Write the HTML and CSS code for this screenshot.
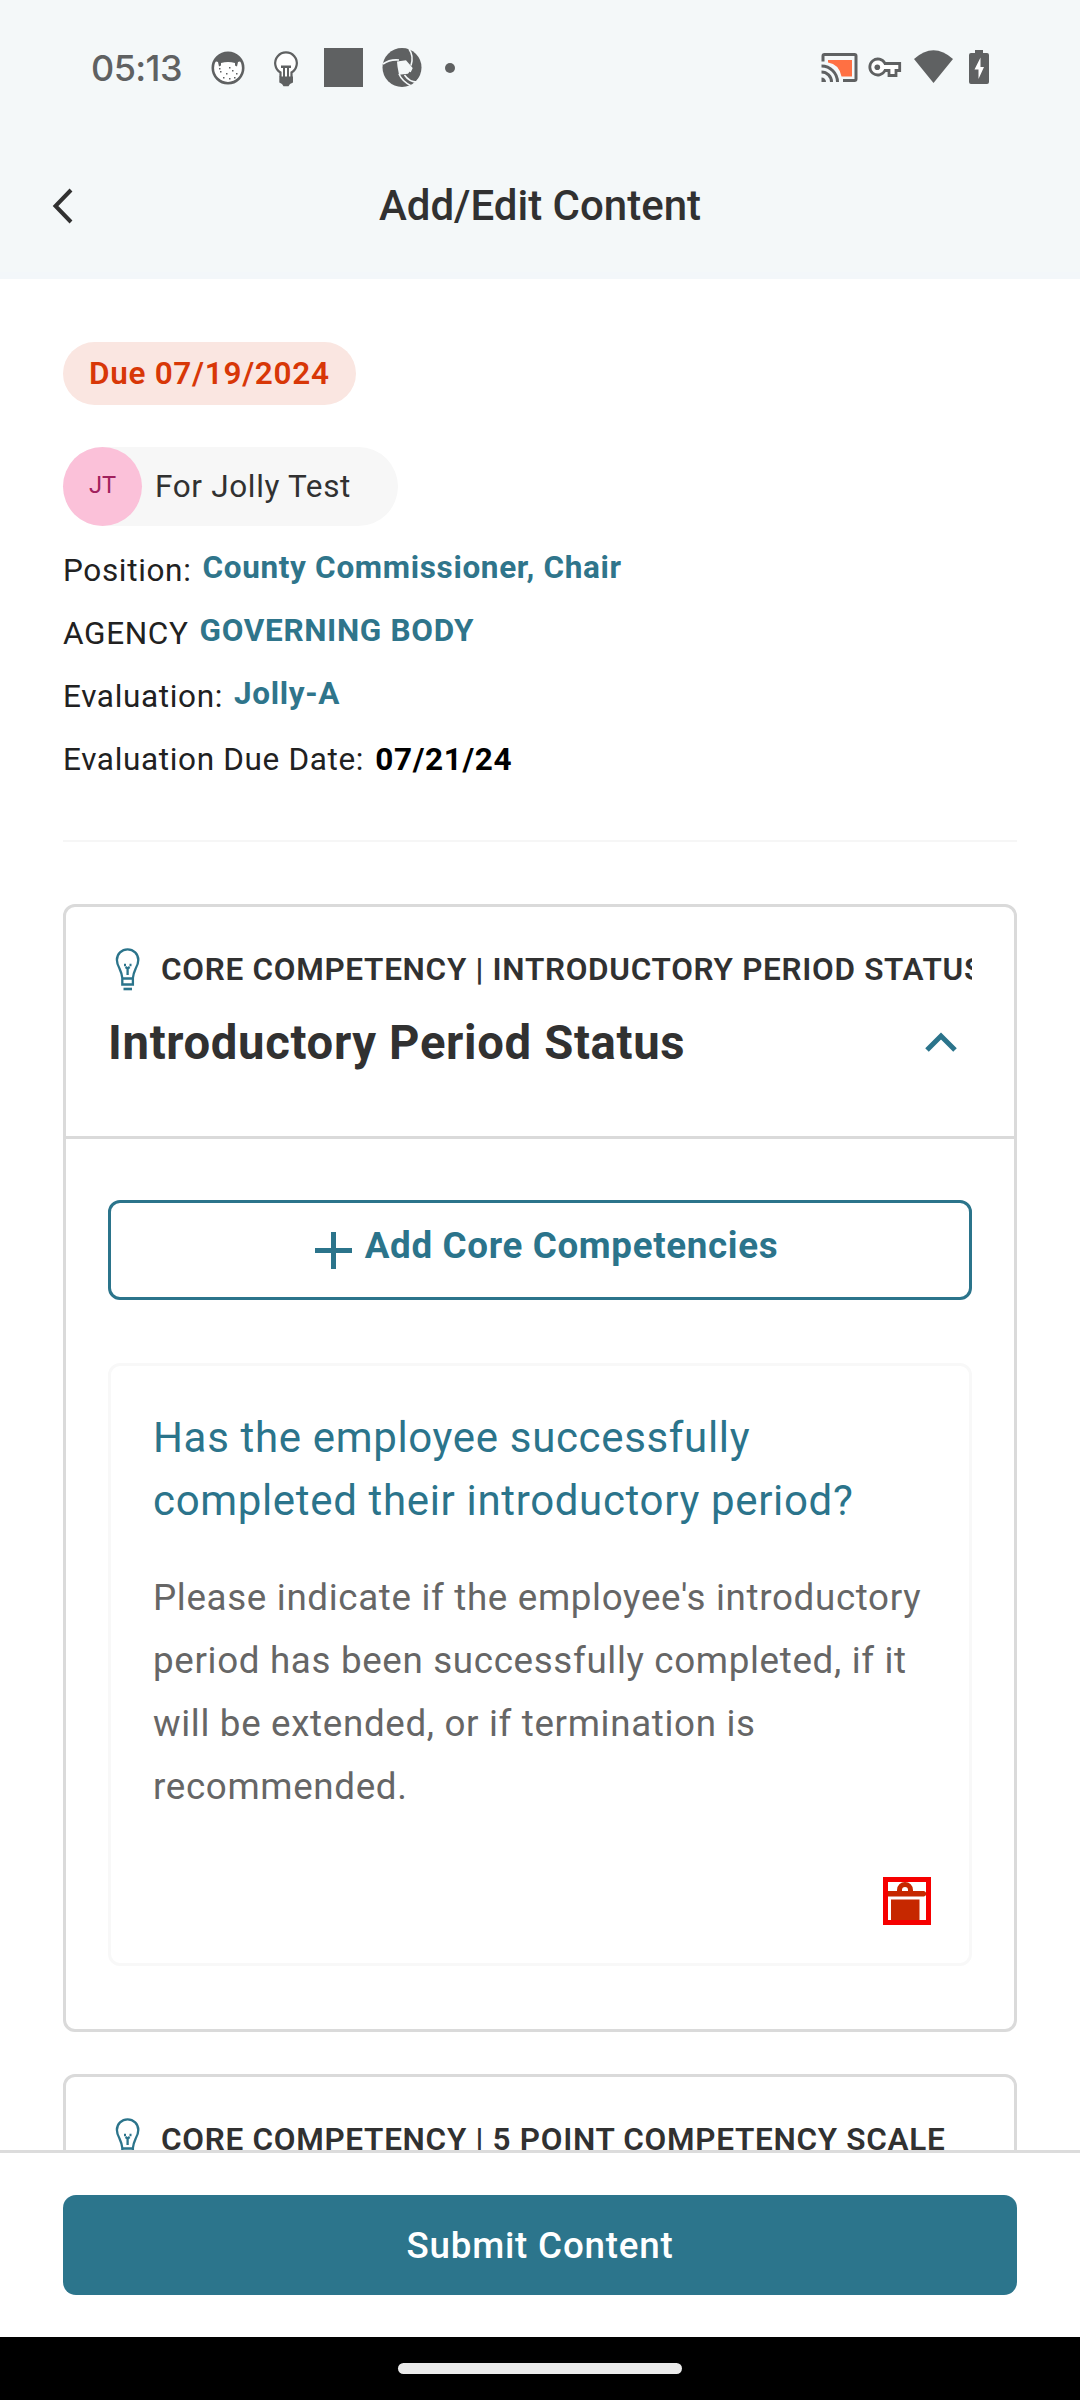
FILE: index.html
```html
<!DOCTYPE html>
<html lang="en">
<head>
<meta charset="utf-8">
<title>Add/Edit Content</title>
<link rel="stylesheet" href="styles.css">
</head>
<body>
<div class="screen">
  <header class="top">
    <div class="status">
      <span class="clock">05:13</span>
      <svg class="status-left" width="250" height="48" viewBox="206 44 250 48" fill="#5f6162">
        <circle cx="228" cy="68" r="15.2" fill="#fff" stroke="#5f6162" stroke-width="2.6"/>
        <path d="M214.500 61a15 15 0 0 1 27 0l-3.500 1-1 4.500-2-1v-2.500q-7-2-14 0v2.500l-2 1-1-4.500z"/>
        <path d="M220 71h1.500v1.500h-1.500zM226 73h1.500v1.500h-1.500zM232 70h1.500v1.500h-1.500zM236 73h1.500v1.500h-1.500zM223 77h1.500v1.500h-1.500zM229 78h1.500v1.500h-1.500zM234 77h1.500v1.500h-1.500zM219 68h1.500v1.500h-1.500zM229 67h1.500v1.500h-1.500z"/>
        <path d="M280.500 77v-4.500a10.800 10.800 0 1 1 11 0V77" fill="#fff" stroke="#5f6162" stroke-width="2.200"/>
        <path d="M279.300 76.500h13.700v6l-3 1.500-1.500 2.200h-5l-1.500-2.200-2.700-1.500z"/>
        <path d="M281 65.500h10v2.500h-2v10h-2v-10h-2v10h-2v-10h-2z"/>
        <path d="M324 48h39v39h-39z"/>
        <circle cx="402" cy="67.500" r="19.500"/>
        <path d="M397 61.500l9-1.200 6.500 7.500-4.500 6-9 1-1.500-8z" fill="#f4f8f9"/>
        <path d="M383 64q7-5 16-4M409 49q5 7 2 16.500M419 82q-9 1-14.500-7M412 68l-2 4M399 74q3 7 11.500 11.500" fill="none" stroke="#f4f8f9" stroke-width="1.600"/>
        <path d="M419 78l3-2v8h-8z" fill="#f4f8f9"/>
        <circle cx="450" cy="68" r="5"/>
      </svg>
      <svg class="status-right" width="180" height="48" viewBox="816 44 180 48" fill="#5f6162">
        <path d="M828 60h24v16.500h-10.500Q839 64 828 62.500z" fill="#ff7043"/>
        <path d="M823 61.500v-5.500a1.500 1.500 0 0 1 1.500-1.500h30a1.500 1.500 0 0 1 1.500 1.500v23a1.500 1.500 0 0 1-1.500 1.500H843" fill="none" stroke="#5f6162" stroke-width="3"/>
        <path d="M821.500 66a16 16 0 0 1 16 16M821.500 72a10 10 0 0 1 10 10" fill="none" stroke="#5f6162" stroke-width="3"/>
        <path d="M821.500 77.500a4.500 4.500 0 0 1 4.500 4.500h-4.500z"/>
        <path d="M885 63.500h14.700v7h-3.700v5h-7v-5h-4a8 8 0 1 1 0-7z" fill="#fff" stroke="#5f6162" stroke-width="2.800"/>
        <circle cx="877.300" cy="67.300" r="2.800"/>
        <path d="M914 59Q933.500 41.500 953 59L933.500 83z"/>
        <path d="M975 50h8v3h4a2 2 0 0 1 2 2v27a2 2 0 0 1-2 2h-16a2 2 0 0 1-2-2V55a2 2 0 0 1 2-2h4z"/>
        <path d="M980.500 57.500v9.500h3.500l-5.500 12v-9.500H974.500z" fill="#fff"/>
      </svg>
    </div>
    <div class="appbar">
      <svg class="back" width="22" height="36" viewBox="0 0 22 36"><path d="M19 2L3.500 18 19 34" fill="none" stroke="#313131" stroke-width="4"/></svg>
      <h1 class="title">Add/Edit Content</h1>
    </div>
  </header>

  <main class="content">
    <div class="due">Due 07/19/2024</div>
    <div class="person"><span class="avatar">JT</span><span class="person-name">For Jolly Test</span></div>
    <dl class="facts">
      <div class="fact"><dt>Position:</dt><dd>County Commissioner, Chair</dd></div>
      <div class="fact"><dt>AGENCY</dt><dd>GOVERNING BODY</dd></div>
      <div class="fact"><dt>Evaluation:</dt><dd>Jolly-A</dd></div>
      <div class="fact"><dt>Evaluation Due Date:</dt><dd class="date">07/21/24</dd></div>
    </dl>
    <hr class="rule">

    <section class="card">
      <div class="card-head">
        <div class="kicker">
          <svg class="bulb" width="40" height="44" viewBox="0 0 40 44"><use href="#bulb-shape"/></svg>
          <span class="kicker-text">CORE COMPETENCY | INTRODUCTORY PERIOD STATUS</span>
        </div>
        <div class="card-title-row">
          <h2 class="card-title">Introductory Period Status</h2>
          <svg class="chevron" width="32" height="20" viewBox="0 0 32 20"><path d="M2 18L16 4 30 18" fill="none" stroke="#2b748b" stroke-width="5"/></svg>
        </div>
      </div>
      <div class="card-body">
        <button class="add">
          <svg width="37" height="37" viewBox="0 0 37 37"><path d="M18.500 0v37M0 18.500h37" stroke="#2b748b" stroke-width="5"/></svg>
          <span class="add-text">Add Core Competencies</span>
        </button>
        <article class="item">
          <h3 class="question">Has the employee successfully<br>completed their introductory period?</h3>
          <p class="help">Please indicate if the employee's introductory<br>period has been successfully completed, if it<br>will be extended, or if termination is<br>recommended.</p>
          <svg class="trash" width="48" height="48" viewBox="0 0 48 48">
            <path d="M5 14h36a2.800 2.800 0 0 1 0 5.500H5z" fill="#c62800"/>
            <path d="M16.500 16v-3a5.500 5.500 0 0 1 11 0v3" fill="none" stroke="#c62800" stroke-width="5"/>
            <path d="M8 22.500h28.500V44H8z" fill="#c62800"/>
            <path d="M2.500 2.500h43v43h-43z" fill="none" stroke="#f60000" stroke-width="5"/>
          </svg>
        </article>
      </div>
    </section>

    <section class="card next-card">
      <div class="card-head">
        <div class="kicker">
          <svg class="bulb" width="40" height="44" viewBox="0 0 40 44"><use href="#bulb-shape"/></svg>
          <span class="kicker-text">CORE COMPETENCY | 5 POINT COMPETENCY SCALE</span>
        </div>
      </div>
    </section>
  </main>

  <footer class="footer"><button class="submit">Submit Content</button></footer>
  <nav class="nav"><span class="handle"></span></nav>
</div>
<svg width="0" height="0" class="defs">
  <defs>
    <g id="bulb-shape" fill="none" stroke="#2b748b" stroke-width="2.300">
      <path d="M14.300 36.500V30Q14 26 11.500 20.500C9.500 17 8.900 14.500 8.900 12A10.700 10.700 0 0 1 30.300 12C30.300 14.500 29.700 17 27.700 20.500Q25.200 26 24.900 30V36.500zM14 30.500h11.200"/>
      <path d="M19.600 27v-7.500M16 17h2M21.500 17h2M17.500 19l2.100 1.500 2.100-1.500"/>
      <path d="M15.500 41h8.500" stroke-width="2.600"/>
    </g>
  </defs>
</svg>
</body>
</html>
```
FILE: styles.css
```css
* { box-sizing: border-box; margin: 0; padding: 0; }
body { font-family: Roboto, "Liberation Sans", sans-serif; background: #fff; color: #313131; }
button { font: inherit; }
.screen { width: 1080px; height: 2400px; display: flex; flex-direction: column; overflow: hidden; background: #fff; }
.defs { display: block; }

.top { height: 279px; flex: none; background: #f4f8f9; border-bottom: 7px solid #f3f7fa; }
.status { height: 136px; display: flex; align-items: center; padding: 0 84px 0 91px; }
.clock { width: 115px; font-family: Inter, sans-serif; font-size: 36px; font-weight: 500; line-height: 48px; color: #5f6162; letter-spacing: -0.6px; }
.status-right { margin-left: auto; }
.appbar { height: 136px; display: grid; grid-template-columns: 63px 1fr 63px; align-items: center; padding: 3px 52px 0; }
.title { grid-column: 2; text-align: center; font-size: 42px; font-weight: 500; line-height: 56px; }

.content { flex: 1; min-height: 0; overflow: hidden; padding: 63px 63px 0; display: flex; flex-direction: column; }
.content > * { flex: none; }
.due { align-self: flex-start; height: 63px; border-radius: 32px; padding: 0 26px; background: #fae6e1; color: #d83707; font-size: 31.5px; font-weight: 600; line-height: 63px; letter-spacing: 0.7px; }
.person { align-self: flex-start; display: flex; align-items: center; width: 335px; height: 79px; margin-top: 42px; border-radius: 40px; background: #f7f7f7; }
.avatar { width: 79px; height: 79px; border-radius: 50%; background: #fbc1d9; color: #a1215d; font-size: 23.6px; line-height: 76px; text-align: center; }
.person-name { margin-left: 13px; font-size: 31.5px; letter-spacing: 0.66px; }
.facts { margin-top: 13px; }
.fact { display: flex; align-items: center; gap: 11px; height: 63px; font-size: 31.5px; line-height: 38px; letter-spacing: 0.66px; color: #212121; }
.fact dd { padding-bottom: 5px; color: #2f758b; font-weight: 700; }
.fact .date { padding-bottom: 0; color: #000; }
.rule { height: 2px; margin-top: 49px; border: 0; background: #f6f6f6; }

.card { margin-top: 62px; border: 3px solid #dadada; border-radius: 12px; }
.next-card { margin-top: 42px; }
.card-head { height: 229px; padding: 41px 42px 0; }
.kicker { display: flex; align-items: flex-start; gap: 13px; height: 44px; overflow: hidden; }
.bulb, .kicker-text { flex: none; }
.kicker-text { font-size: 31.5px; font-weight: 600; line-height: 44px; letter-spacing: 0.7px; white-space: nowrap; }
.card-title-row { display: flex; align-items: center; justify-content: space-between; height: 63px; margin-top: 20px; padding-right: 15px; }
.card-title { font-size: 47.25px; font-weight: 700; letter-spacing: 0.66px; line-height: 63px; }
.chevron { margin-bottom: 4px; }
.card-body { border-top: 3px solid #dadada; padding: 61px 42px 63px; }
.add { display: flex; align-items: center; justify-content: center; gap: 13px; width: 100%; height: 100px; padding-left: 13px; border: 3px solid #2b748b; border-radius: 12px; background: #fff; color: #2b748b; font-size: 36.75px; font-weight: 700; letter-spacing: 0.66px; }
.add-text { padding-bottom: 9px; }
.item { display: flex; flex-direction: column; height: 603px; margin-top: 63px; padding: 40px 38px 38px 42px; border: 3px solid #f8f8f8; border-radius: 12px; }
.question { font-size: 42px; font-weight: 400; line-height: 63px; letter-spacing: 0.66px; color: #2b748b; white-space: nowrap; }
.help { margin-top: 34px; font-size: 36.75px; line-height: 63px; letter-spacing: 0.66px; color: #666; white-space: nowrap; }
.trash { margin: auto 0 0 auto; }

.footer { flex: none; height: 187px; padding: 42px 63px 0; border-top: 3px solid #dcdcdc; background: #fff; }
.submit { display: block; width: 100%; height: 100px; border: 0; border-radius: 13px; background: #2c758c; color: #fff; font-size: 36.75px; font-weight: 500; letter-spacing: 0.8px; }
.nav { flex: none; height: 63px; display: flex; justify-content: center; padding-top: 26px; background: #000; }
.handle { width: 284px; height: 11px; border-radius: 6px; background: #ebebeb; }
```
